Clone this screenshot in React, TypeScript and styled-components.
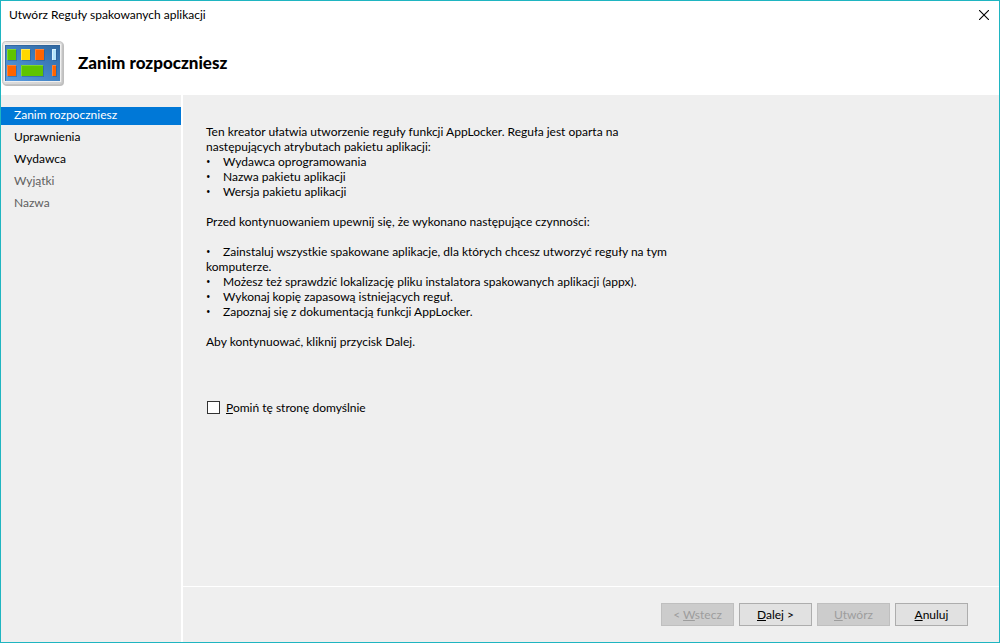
import React from "react";
import styled, { createGlobalStyle } from "styled-components";

const GlobalStyle = createGlobalStyle`
  * { box-sizing: border-box; }
  body {
    margin: 0;
    background: #fff;
    color: #000;
    font: 12px/15px Lato, "Open Sans", sans-serif;
  }
`;

const Wizard = styled.div`
  display: flex;
  flex-direction: column;
  min-height: 100vh;
  border: 1px solid #1fb5c1;
  background: #fff;
`;

const TitleBar = styled.header`
  display: flex;
  align-items: flex-start;
  justify-content: space-between;
  height: 30px;
  padding-left: 8px;
`;

const Title = styled.span`
  line-height: 28px;
`;

const CloseButton = styled.button`
  display: flex;
  align-items: center;
  justify-content: center;
  width: 30px;
  height: 28px;
  padding: 0;
  border: 0;
  background: transparent;
`;

const Banner = styled.div`
  display: flex;
  align-items: center;
  gap: 13px;
  height: 64px;
  padding-left: 1px;
`;

const Heading = styled.h1`
  margin: 0;
  font-size: 17px;
  line-height: 20px;
  font-weight: 900;
`;

const Body = styled.div`
  display: flex;
  flex: 1;
  gap: 2px;
`;

const Steps = styled.nav`
  display: flex;
  flex-direction: column;
  gap: 4px;
  width: 180px;
  padding-top: 12px;
  background: #efefef;
`;

const Step = styled.a<{ $state?: "current" | "pending" }>`
  height: 18px;
  padding-left: 13px;
  line-height: 16px;
  text-decoration: none;
  background: ${(p) => (p.$state === "current" ? "#0078d7" : "transparent")};
  color: ${(p) =>
    p.$state === "current" ? "#fff" : p.$state === "pending" ? "#606060" : "#000"};
`;

const Page = styled.div`
  display: flex;
  flex: 1;
  flex-direction: column;
`;

const Content = styled.main`
  flex: 1;
  padding: 29px 23px;
  background: #efefef;
`;

const Copy = styled.div`
  max-width: 500px;
`;

const Paragraph = styled.p`
  margin: 0;
`;

const SpacedParagraph = styled(Paragraph)`
  margin-bottom: 15px;
`;

const Bullets = styled.ul`
  margin: 0 0 15px;
  padding: 0;
  list-style: none;
`;

const Dot = styled.span`
  display: inline-block;
  width: 17px;
  font-family: "Open Sans", sans-serif;
  line-height: 12px;
`;

const SkipOption = styled.label`
  display: inline-flex;
  align-items: center;
  gap: 6px;
  margin-top: 51px;
  padding-left: 1px;
`;

const CheckBox = styled.input`
  appearance: none;
  width: 13px;
  height: 13px;
  margin: 0;
  border: 1px solid #333;
  background: #fff;

  &:checked { box-shadow: inset 0 0 0 2px #fff; background: #333; }
`;

const Key = styled.span`
  text-decoration: underline;
  text-underline-offset: 1px;
  text-decoration-thickness: 1px;
  text-decoration-skip-ink: none;
`;

const Footer = styled.footer`
  display: flex;
  justify-content: flex-end;
  gap: 5px;
  padding: 16px 31px;
  border-top: 1px solid #fff;
  background: #efefef;
`;

const PushButton = styled.button`
  width: 73px;
  height: 23px;
  padding: 0;
  border: 1px solid #adadad;
  background: #e1e1e1;
  color: #000;
  font: inherit;

  &:disabled {
    border-color: #bfbfbf;
    background: #ccc;
    color: #9d9d9d;
  }
`;

const tiles = [
  { x: 5, y: 9, w: 9, h: 11, fill: "#5fc400", edge: "#7fd62c" },
  { x: 19, y: 9, w: 9, h: 11, fill: "#ffd800", edge: "#ffe75c" },
  { x: 33, y: 9, w: 9, h: 11, fill: "#ff6400", edge: "#ff8236" },
  { x: 50, y: 9, w: 4, h: 11, fill: "#b4e4fb", edge: "#d8f3ff" },
  { x: 5, y: 25, w: 9, h: 11, fill: "#ff6400", edge: "#ff8236" },
  { x: 19, y: 25, w: 22, h: 11, fill: "#5fc400", edge: "#7fd62c" },
  { x: 50, y: 25, w: 4, h: 11, fill: "#ff6400", edge: "#ff8236" },
];

function AppsIcon() {
  return (
    <svg width="63" height="46" viewBox="0 0 63 46" aria-hidden="true">
      <defs>
        <linearGradient id="frame" x1="0" y1="0" x2="1" y2="1">
          <stop offset="0" stopColor="#e8e8e8" />
          <stop offset="1" stopColor="#d0d0d0" />
        </linearGradient>
        <linearGradient id="screen" x1="0" y1="1" x2="1" y2="0">
          <stop offset="0" stopColor="#5b9ee2" />
          <stop offset="0.55" stopColor="#3f7fc0" />
          <stop offset="1" stopColor="#2f679f" />
        </linearGradient>
      </defs>
      <rect x="1" y="2" width="61" height="44" rx="4" fill="#888" opacity="0.55" />
      <rect x="0.5" y="1.5" width="60" height="43" rx="3" fill="url(#frame)" stroke="#c4c4c4" />
      <rect x="2.5" y="4.5" width="56" height="37" fill="none" stroke="#f0f0f0" />
      <rect x="3" y="5" width="55" height="36" fill="url(#screen)" />
      <path d="M3.5 41V5.5H58" fill="none" stroke="#2d5f96" strokeOpacity="0.7" />
      {tiles.map((t) => (
        <g key={`${t.x}-${t.y}`}>
          <rect x={t.x + 1} y={t.y + 1} width={t.w} height={t.h} fill="#1d4f86" opacity="0.4" />
          <rect x={t.x} y={t.y} width={t.w} height={t.h} fill={t.fill} />
          <path d={`M${t.x + 0.5} ${t.y + t.h}V${t.y + 0.5}H${t.x + t.w}`} fill="none" stroke={t.edge} />
        </g>
      ))}
    </svg>
  );
}

function BulletItem({ children }: { children: React.ReactNode }) {
  return (
    <li>
      <Dot>•</Dot>
      {children}
    </li>
  );
}

export default function App() {
  return (
    <>
      <GlobalStyle />
      <Wizard>
        <TitleBar>
          <Title>Utwórz Reguły spakowanych aplikacji</Title>
          <CloseButton type="button" aria-label="Zamknij">
            <svg width="10" height="10" viewBox="0 0 10 10" aria-hidden="true">
              <path d="M0 0L10 10M10 0L0 10" stroke="#000" strokeWidth="1.1" />
            </svg>
          </CloseButton>
        </TitleBar>
        <Banner>
          <AppsIcon />
          <Heading>Zanim rozpoczniesz</Heading>
        </Banner>
        <Body>
          <Steps>
            <Step href="#start" $state="current">Zanim rozpoczniesz</Step>
            <Step href="#uprawnienia">Uprawnienia</Step>
            <Step href="#wydawca">Wydawca</Step>
            <Step href="#wyjatki" $state="pending">Wyjątki</Step>
            <Step href="#nazwa" $state="pending">Nazwa</Step>
          </Steps>
          <Page>
            <Content>
              <Copy>
                <Paragraph>
                  Ten kreator ułatwia utworzenie reguły funkcji AppLocker. Reguła jest oparta na
                  <br />
                  następujących atrybutach pakietu aplikacji:
                </Paragraph>
                <Bullets>
                  <BulletItem>Wydawca oprogramowania</BulletItem>
                  <BulletItem>Nazwa pakietu aplikacji</BulletItem>
                  <BulletItem>Wersja pakietu aplikacji</BulletItem>
                </Bullets>
                <SpacedParagraph>
                  Przed kontynuowaniem upewnij się, że wykonano następujące czynności:
                </SpacedParagraph>
                <Bullets>
                  <BulletItem>
                    Zainstaluj wszystkie spakowane aplikacje, dla których chcesz utworzyć reguły na tym
                    <br />
                    komputerze.
                  </BulletItem>
                  <BulletItem>
                    Możesz też sprawdzić lokalizację pliku instalatora spakowanych aplikacji (appx).
                  </BulletItem>
                  <BulletItem>Wykonaj kopię zapasową istniejących reguł.</BulletItem>
                  <BulletItem>Zapoznaj się z dokumentacją funkcji AppLocker.</BulletItem>
                </Bullets>
                <Paragraph>Aby kontynuować, kliknij przycisk Dalej.</Paragraph>
              </Copy>
              <SkipOption>
                <CheckBox type="checkbox" />
                <span><Key>P</Key>omiń tę stronę domyślnie</span>
              </SkipOption>
            </Content>
            <Footer>
              <PushButton type="button" disabled>&lt; <Key>W</Key>stecz</PushButton>
              <PushButton type="button"><Key>D</Key>alej &gt;</PushButton>
              <PushButton type="button" disabled><Key>U</Key>twórz</PushButton>
              <PushButton type="button"><Key>A</Key>nuluj</PushButton>
            </Footer>
          </Page>
        </Body>
      </Wizard>
    </>
  );
}
